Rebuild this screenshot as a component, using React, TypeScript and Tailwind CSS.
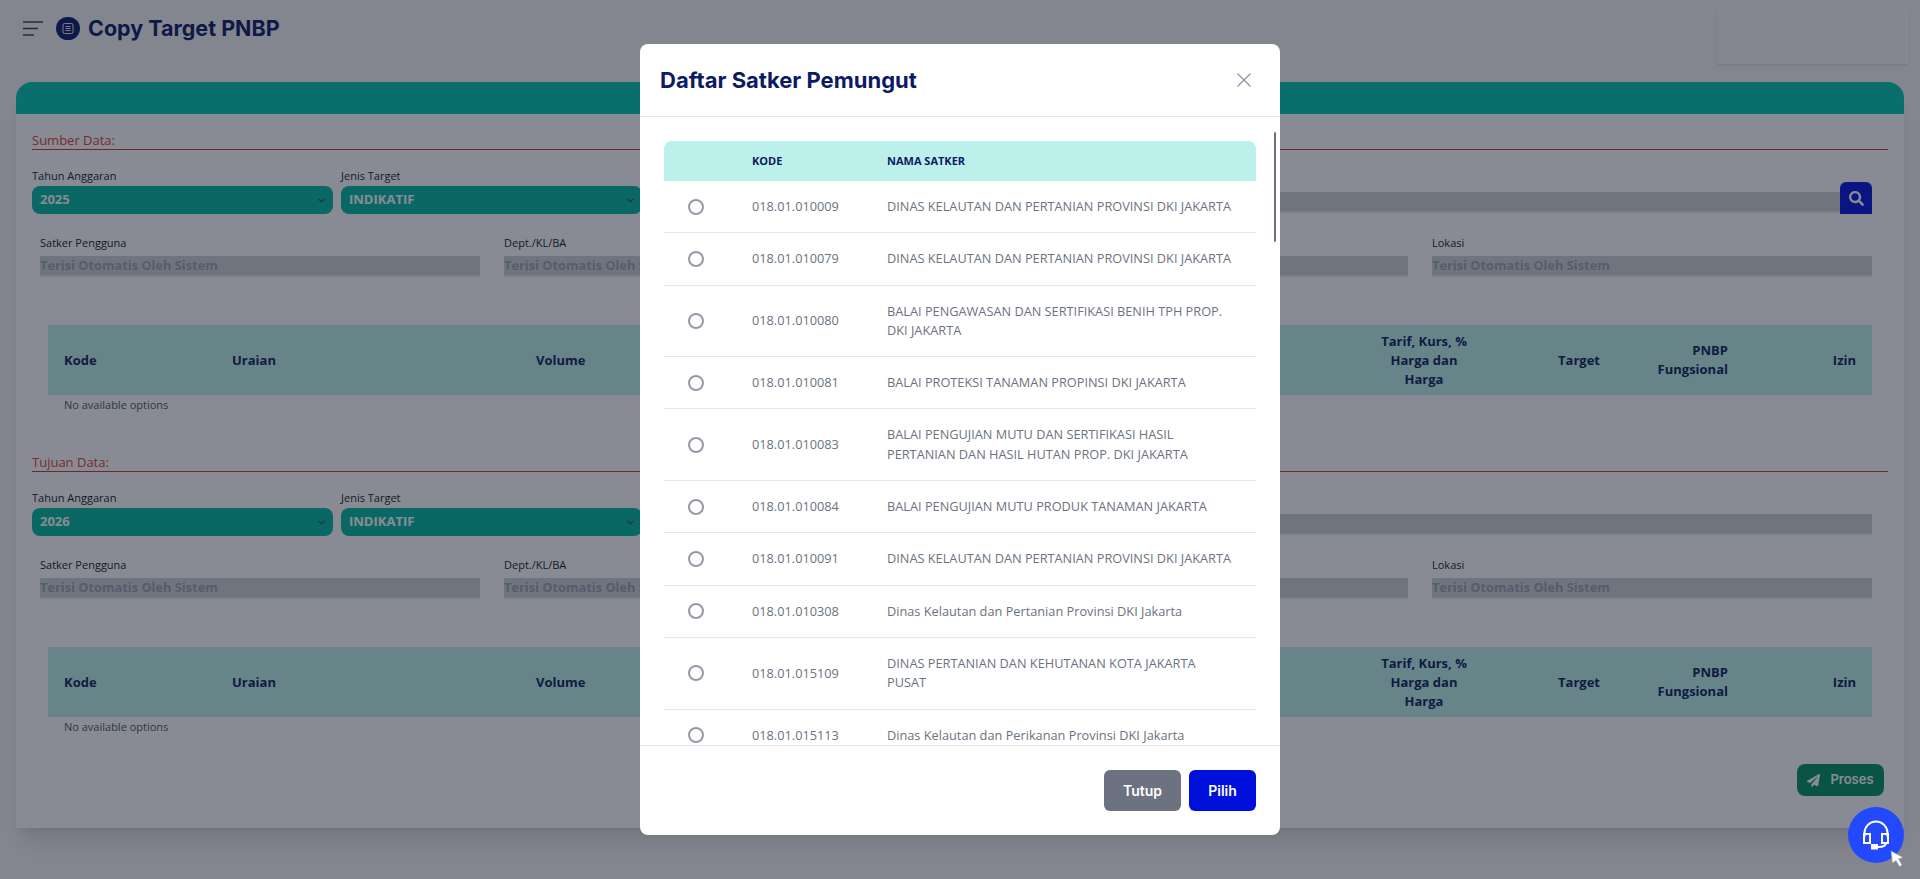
import { ChevronDown, X } from 'lucide-react';
import { FaPaperPlane, FaSearch } from 'react-icons/fa';

type Satker = { kode: string; nama: string };

const satkerList: Satker[] = [
  { kode: '018.01.010009', nama: 'DINAS KELAUTAN DAN PERTANIAN PROVINSI DKI JAKARTA' },
  { kode: '018.01.010079', nama: 'DINAS KELAUTAN DAN PERTANIAN PROVINSI DKI JAKARTA' },
  { kode: '018.01.010080', nama: 'BALAI PENGAWASAN DAN SERTIFIKASI BENIH TPH PROP. DKI JAKARTA' },
  { kode: '018.01.010081', nama: 'BALAI PROTEKSI TANAMAN PROPINSI DKI JAKARTA' },
  { kode: '018.01.010083', nama: 'BALAI PENGUJIAN MUTU DAN SERTIFIKASI HASIL PERTANIAN DAN HASIL HUTAN PROP. DKI JAKARTA' },
  { kode: '018.01.010084', nama: 'BALAI PENGUJIAN MUTU PRODUK TANAMAN JAKARTA' },
  { kode: '018.01.010091', nama: 'DINAS KELAUTAN DAN PERTANIAN PROVINSI DKI JAKARTA' },
  { kode: '018.01.010308', nama: 'Dinas Kelautan dan Pertanian Provinsi DKI Jakarta' },
  { kode: '018.01.015109', nama: 'DINAS PERTANIAN DAN KEHUTANAN KOTA JAKARTA PUSAT' },
  { kode: '018.01.015113', nama: 'Dinas Kelautan dan Perikanan Provinsi DKI Jakarta' },
];

const Select = ({ value }: { value: string }) => (
  <div className="flex h-7 items-center justify-between rounded-lg bg-[#03b8a0] pl-2 pr-1.5 text-[13px] font-bold text-white">
    <span>{value}</span>
    <ChevronDown size={11} strokeWidth={2.5} className="text-[#374151]" />
  </div>
);

const ReadOnlyField = ({ label }: { label: string }) => (
  <div>
    <div className="mb-1 text-[11px] leading-[18px] text-[#111827]">{label}</div>
    <div className="h-[21px] overflow-hidden border-b-2 border-[#e2e5e9] bg-[#cdd2d7] text-[12.800px] font-bold leading-[19px] text-[#9aa1ad]">
      Terisi Otomatis Oleh Sistem
    </div>
  </div>
);

const Section = ({ title, year, search }: { title: string; year: string; search?: boolean }) => (
  <section>
    <div className="flex h-[26px] items-end border-b border-[#c93a2a] text-[13px] leading-[17px] text-[#d8432f]">{title}</div>
    <div className="mt-[17px] flex items-end pr-4">
      <div className="flex w-[301px] flex-col">
        <div className="mb-px text-[11px] leading-[18px] text-[#111827]">Tahun Anggaran</div>
        <Select value={year} />
      </div>
      <div className="ml-2 flex w-[301px] flex-col">
        <div className="mb-px text-[11px] leading-[18px] text-[#111827]">Jenis Target</div>
        <Select value="INDIKATIF" />
      </div>
      <div className="ml-2 flex min-w-0 flex-1 items-end">
        <div className="mb-px h-[21px] flex-1 border-b-2 border-[#e2e5e9] bg-[#cdd2d7]" />
        {search && (
          <div className="flex h-8 w-8 items-center justify-center rounded-t-md bg-[#0312e0] text-white">
            <FaSearch size={15} />
          </div>
        )}
      </div>
    </div>
    <div className="mt-5 grid grid-cols-4 gap-x-6 pl-2 pr-4">
      <ReadOnlyField label="Satker Pengguna" />
      <ReadOnlyField label="Dept./KL/BA" />
      <ReadOnlyField label="Unit Eselon I" />
      <ReadOnlyField label="Lokasi" />
    </div>
    <table className="mt-12 ml-4 w-[1824px] table-fixed border-collapse text-[13px] font-bold leading-[19px] text-[#101c5c]">
      <colgroup>
        <col className="w-[184px]" />
        <col className="w-[304px]" />
        <col className="w-[838px]" />
        <col className="w-[100px]" />
        <col className="w-[142px]" />
        <col className="w-[128px]" />
        <col className="w-[128px]" />
      </colgroup>
      <thead>
        <tr className="h-[70px] bg-[#bcf0ea]">
          <th className="pl-4 text-left font-bold">Kode</th>
          <th className="text-left font-bold">Uraian</th>
          <th className="text-left font-bold">Volume</th>
          <th className="px-1.5 text-center font-bold">Tarif, Kurs, % Harga dan Harga</th>
          <th className="pr-4 text-right font-bold">Target</th>
          <th className="pl-6 pr-4 text-right font-bold">PNBP Fungsional</th>
          <th className="pr-4 text-right font-bold">Izin</th>
        </tr>
      </thead>
    </table>
    <div className="mt-[1px] pl-8 text-[11px] leading-[18px] text-[#4b5563]">No available options</div>
  </section>
);

const SatkerModal = () => (
  <div className="absolute inset-0 flex justify-center bg-[#111827]/50 pt-11">
    <div className="flex h-[791px] w-[640px] flex-col overflow-hidden rounded-lg bg-white">
      <div className="flex h-[73px] shrink-0 items-center justify-between border-b border-[#e5e7eb] px-5">
        <h2 className="font-['Inter',sans-serif] text-[22px] font-bold text-[#0c1a66]">Daftar Satker Pemungut</h2>
        <X size={24} strokeWidth={1.25} className="mr-1 text-[#8a92a6]" />
      </div>
      <div className="relative min-h-0 flex-1 overflow-hidden px-6 pt-6">
        <div className="absolute right-1 top-[15px] h-[110px] w-[2px] rounded-full bg-[#6b7280]" />
        <table className="w-full table-fixed border-collapse text-[12.750px] leading-[19.300px]">
          <colgroup>
            <col className="w-[88px]" />
            <col className="w-[135px]" />
            <col />
          </colgroup>
          <thead>
            <tr className="h-10 bg-[#bcf0ea] text-[11px] font-bold text-[#0c1a66]">
              <th className="rounded-tl-lg" />
              <th className="text-left font-bold">KODE</th>
              <th className="rounded-tr-lg text-left font-bold">NAMA SATKER</th>
            </tr>
          </thead>
          <tbody className="text-[#6b7280]">
            {satkerList.map(item => (
              <tr key={item.kode} className="border-b border-[#e5e7eb]">
                <td className="py-4">
                  <div className="ml-6 h-4 w-4 rounded-full border-2 border-[#9a98a5]" />
                </td>
                <td className="py-4">{item.kode}</td>
                <td className="py-4 pr-6">{item.nama}</td>
              </tr>
            ))}
          </tbody>
        </table>
      </div>
      <div className="flex h-[90px] shrink-0 items-start justify-end gap-2 border-t border-[#e5e7eb] px-6 pt-6 font-['Inter',sans-serif] text-[14px] font-semibold text-white">
        <button className="h-[41px] w-[77px] rounded-md bg-[#6c727f]">Tutup</button>
        <button className="h-[41px] w-[67px] rounded-md bg-[#0010dc]">Pilih</button>
      </div>
    </div>
  </div>
);

const HelpButton = () => (
  <div className="absolute bottom-4 right-4 flex h-14 w-14 items-center justify-center rounded-full bg-[#2349ff]">
    <svg width="28" height="30" viewBox="0 0 28 30" fill="none" stroke="white" strokeWidth="2">
      <path d="M2.5 17V13a11.5 11.5 0 0 1 23 0v4" />
      <rect x="2" y="14" width="6" height="9" />
      <rect x="20" y="14" width="6" height="9" />
      <path d="M24 23c0 3-3 4-8 4" />
      <rect x="10" y="25" width="5" height="3.5" fill="white" />
    </svg>
    <svg className="absolute -bottom-1 right-0" width="14" height="17" viewBox="0 0 14 17">
      <path d="M1 1l12 6.5-4.5 1.5 3.5 6-2.5 1.5-3.500-6L2.500 13z" fill="white" stroke="#9ca3af" strokeWidth="0.5" />
    </svg>
  </div>
);

export default function App() {
  return (
    <div className="relative h-[879px] overflow-hidden bg-[#f5f5f7] font-['Open_Sans',sans-serif]">
      <header className="flex h-[82px] items-start justify-between pl-[22px] pr-[11px]">
        <div className="flex items-center pt-3">
          <svg width="21" height="15" viewBox="0 0 21 15" stroke="#374151" strokeWidth="1.6">
            <path d="M1 1h20M1 7.500h15M1 14h11" />
          </svg>
          <div className="ml-[13px] flex h-[23px] w-6 items-center justify-center rounded-full bg-[#0c1a66]">
            <svg width="12" height="11" viewBox="0 0 12 11" fill="none" stroke="white" strokeWidth="0.9">
              <rect x="1" y="0.500" width="10" height="10" rx="1.500" />
              <path d="M3.500 3.500h5M3.500 5.500h5M3.500 7.500h5" />
            </svg>
          </div>
          <h1 className="ml-2 font-['Inter',sans-serif] text-[21.500px] font-bold text-[#0c1a66]">Copy Target PNBP</h1>
        </div>
        <div className="flex w-[192px] flex-col items-center pt-px">
          <div className="h-[9px] w-[182px] rounded-t-2xl bg-[#f7f7f9]" />
          <div className="h-[54px] w-full bg-[#f7f7f9] shadow-sm" />
        </div>
      </header>

      <main className="mx-4 h-[746px] rounded-t-2xl bg-white shadow-xl">
        <div className="h-8 rounded-t-2xl bg-[#03c6ad]" />
        <div className="flex flex-col gap-[32px] px-4 pt-[10px]">
          <Section title="Sumber Data:" year="2025" search />
          <Section title="Tujuan Data:" year="2026" />
        </div>
      </main>

      <div className="absolute bottom-[83px] right-[36px] flex h-8 w-[87px] items-center justify-center gap-2.5 rounded-lg bg-[#039062] font-['Inter',sans-serif] text-[13px] font-semibold text-white">
        <FaPaperPlane size={13} />
        Proses
      </div>

      <SatkerModal />
      <HelpButton />
    </div>
  );
}
